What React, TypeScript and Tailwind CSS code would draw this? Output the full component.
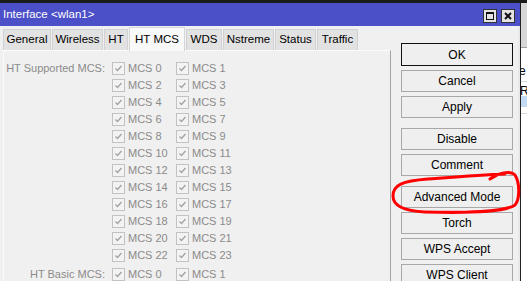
import React from 'react';

const tabs = [
  { name: 'General', w: 'w-[48px]' },
  { name: 'Wireless', w: 'w-[51px]' },
  { name: 'HT', w: 'w-[24px]' },
  { name: 'HT MCS', w: 'w-[56px]', active: true },
  { name: 'WDS', w: 'w-[36px]' },
  { name: 'Nstreme', w: 'w-[51px]' },
  { name: 'Status', w: 'w-[41px]' },
  { name: 'Traffic', w: 'w-[41px]' },
];

const buttonGroups = [
  ['OK', 'Cancel', 'Apply'],
  ['Disable', 'Comment'],
  ['Advanced Mode', 'Torch', 'WPS Accept', 'WPS Client'],
];

const Check: React.FC<{ label: string }> = ({ label }) => (
  <div className="flex items-center w-[64px] h-[17px]">
    <span className="w-[13px] h-[13px] border border-[#c2c2c2] bg-[#f3f3f3] flex items-center justify-center">
      <svg width="9" height="9" viewBox="0 0 9 9">
        <path d="M1.5 4.5 L3.5 6.5 L7.5 2" stroke="#a4a4a4" strokeWidth="1.4" fill="none" />
      </svg>
    </span>
    <span className="ml-[3px] whitespace-nowrap">{label}</span>
  </div>
);

const Row: React.FC<{ label?: string; a: number; b: number }> = ({ label, a, b }) => (
  <div className="flex items-center h-[17px]">
    <div className="w-[102px] text-right pr-[1px] whitespace-nowrap">{label}</div>
    <div className="ml-[6px] flex">
      <Check label={`MCS ${a}`} />
      <Check label={`MCS ${b}`} />
    </div>
  </div>
);

const App: React.FC = () => {
  const rows = Array.from({ length: 12 }, (_, i) => i * 2);

  return (
    <div
      className="relative w-[527px] h-[281px] overflow-hidden bg-[#1c1c1c] text-[11px] leading-none"
      style={{ fontFamily: '"Liberation Sans", Arial, sans-serif' }}
    >
      <div className="flex h-full pt-[3px]">
        {/* Window */}
        <div className="w-[521px] h-full flex flex-col bg-[#f0f0f0] border-r border-[#222]">
          <div className="h-[23px] bg-[#4b4fc8] flex items-center justify-between pl-[3px] pr-[5px] text-white text-[11.5px]">
            <span>Interface &lt;wlan1&gt;</span>
            <div className="flex gap-[4px] mt-[3px]">
              <div className="w-[14px] h-[14px] bg-[#e4e4e4] border border-[#333] flex items-center justify-center">
                <div className="w-[8px] h-[8px] border border-[#111] border-t-2" />
              </div>
              <div className="w-[14px] h-[14px] bg-[#e4e4e4] border border-[#333] flex items-center justify-center">
                <svg width="8" height="8" viewBox="0 0 8 8">
                  <path d="M1 1 L7 7 M7 1 L1 7" stroke="#111" strokeWidth="2" />
                </svg>
              </div>
            </div>
          </div>

          <div className="flex flex-1 min-h-0 border-r-2 border-[#e8e8e8]">
            {/* Tabs and panel */}
            <div className="w-[391px] flex flex-col pl-[3px] pt-[1px]">
              <div className="flex items-end h-[23px] gap-[1px] relative z-10">
                {tabs.map((t) =>
                  t.active ? (
                    <div
                      key={t.name}
                      className={`${t.w} h-[24px] -mb-[1px] bg-[#f9f9f9] border border-b-0 border-[#d6d6d6] flex items-center justify-center text-black text-[11.5px]`}
                    >
                      {t.name}
                    </div>
                  ) : (
                    <div
                      key={t.name}
                      className={`${t.w} h-[21px] bg-[#e2e2e2] border border-b-0 border-[#d2d2d2] flex items-center justify-center text-black text-[11.5px]`}
                    >
                      {t.name}
                    </div>
                  )
                )}
              </div>
              <div className="flex-1 border-t border-l border-t-[#fbfbfb] border-l-[#fbfbfb] border-r border-r-[#a3a3a3] pt-[9px] text-[#8b8b8b] text-[11px]">
                {rows.map((n) => (
                  <Row key={n} label={n === 0 ? 'HT Supported MCS:' : undefined} a={n} b={n + 1} />
                ))}
                <div className="mt-[2px]">
                  <Row label="HT Basic MCS:" a={0} b={1} />
                </div>
              </div>
            </div>

            {/* Buttons */}
            <div className="ml-[10px] mt-[17px] w-[112px] flex flex-col gap-[10px]">
              {buttonGroups.map((g, gi) => (
                <div key={gi} className="flex flex-col gap-[4px]">
                  {g.map((b) => (
                    <div
                      key={b}
                      className={`h-[22px] flex items-center justify-center text-black text-[12px] bg-[#efefef] border ${
                        b === 'OK' ? 'border-[#111] h-[23px]' : 'border-[#a8a8a8]'
                      }`}
                    >
                      {b}
                    </div>
                  ))}
                </div>
              ))}
            </div>
          </div>
        </div>

        {/* Background app peeking on the right */}
        <div className="flex-1 flex flex-col bg-white overflow-hidden text-black text-[12px]">
          <div className="h-[45px] bg-[#d6d6d6] border-b border-[#a0a0a0]" />
          <div className="h-[14px]" />
          <div className="h-[20px] leading-[18px] -ml-[2px] border-b border-[#d8d8d8]">e</div>
          <div className="h-[14px] leading-[18px] -ml-[1px]">Ro</div>
          <div className="h-[11px] bg-[#c4d9f4]" />
          <div className="h-[7px] border-b border-[#d8d8d8]" />
        </div>
      </div>

      {/* Red annotation */}
      <svg className="absolute left-0 top-0 pointer-events-none" width="527" height="281" viewBox="0 0 527 281">
        <path
          d="M490 179 C 498 173, 510 170, 515 175 C 520 183, 520 199, 515 205 C 506 212, 462 213, 425 212 C 404 211, 393 206, 393 196 C 393 185, 402 181, 428 179 C 455 177, 480 175, 505 174"
          stroke="#ff0000"
          strokeWidth="3"
          fill="none"
          strokeLinecap="round"
        />
      </svg>
    </div>
  );
};

export default App;
